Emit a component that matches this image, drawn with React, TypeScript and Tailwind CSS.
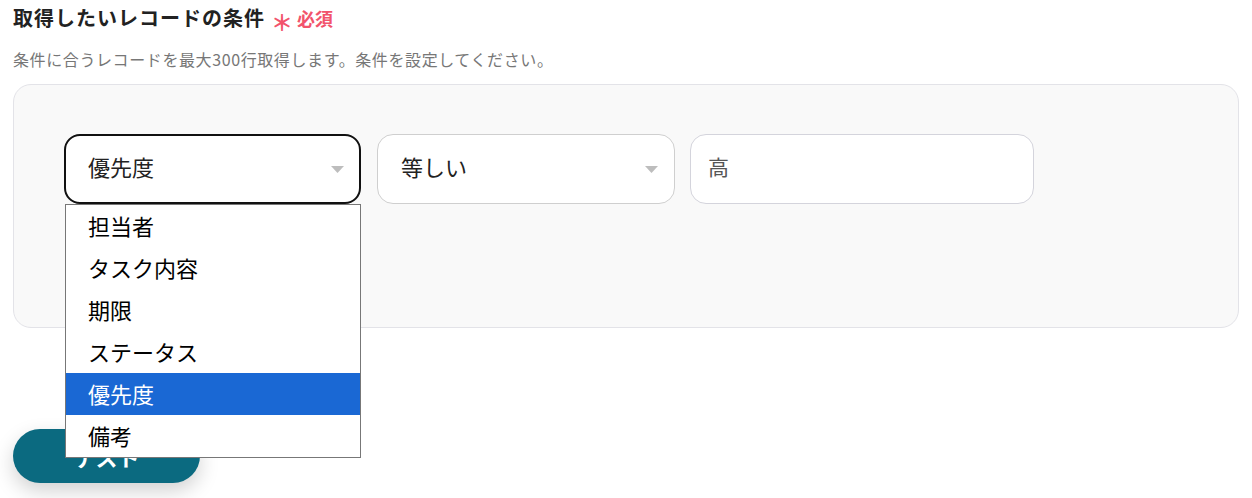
import React from 'react';

const fieldOptions = ['担当者', 'タスク内容', '期限', 'ステータス', '優先度', '備考'];

const Caret: React.FC = () => (
  <svg width="13" height="7" viewBox="0 0 13 7" className="shrink-0">
    <path d="M0 0 L13 0 L6.5 7 Z" fill="#bdbdbd" />
  </svg>
);

const App: React.FC = () => {
  const selected = '優先度';

  return (
    <div
      className="w-[1252px] h-[498px] bg-white px-[13px] pt-[3px] overflow-hidden"
      style={{ fontFamily: '"Noto Sans CJK JP", "Noto Sans", sans-serif' }}
    >
      {/* Heading */}
      <div className="flex items-center gap-[6px] leading-[30px]">
        <h2 className="text-[20px] tracking-[1px] font-bold text-[#222]">取得したいレコードの条件</h2>
        <span className="flex items-center gap-[4px] text-[18px] font-bold text-[#f2536b]">
          <span className="text-[22px] leading-none mt-[5px]">＊</span>
          必須
        </span>
      </div>
      <p className="mt-[15px] text-[16px] tracking-[0.6px] leading-[22px] text-[#777]">
        条件に合うレコードを最大300行取得します。条件を設定してください。
      </p>

      {/* Condition panel */}
      <div className="mt-[14px] h-[244px] rounded-[18px] border border-[#e3e3e8] bg-[#f9f9f9] pt-[49px] pl-[50px]">
        <div className="flex items-center">
          {/* Field select (open) */}
          <div className="relative">
            <div className="w-[297px] h-[70px] rounded-[16px] border-2 border-[#111] bg-white flex items-center justify-between pl-[22px] pr-[15px]">
              <span className="text-[22px] text-[#222] mb-[5px]">{selected}</span>
              <Caret />
            </div>
            <ul className="absolute left-[1px] top-[70px] z-10 w-[296px] border border-[#777] bg-white">
              {fieldOptions.map((opt) => (
                <li
                  key={opt}
                  className={
                    opt === selected
                      ? 'h-[42px] flex items-center pl-[22px] pb-[1px] text-[22px] bg-[#1a68d4] text-white'
                      : 'h-[42px] flex items-center pl-[22px] pb-[1px] text-[22px] text-black'
                  }
                >
                  {opt}
                </li>
              ))}
            </ul>
          </div>

          {/* Operator select */}
          <div className="ml-[16px] w-[298px] h-[70px] rounded-[16px] border border-[#cfcfcf] bg-white flex items-center justify-between pl-[23px] pr-[16px]">
            <span className="text-[22px] text-[#222] mb-[5px]">等しい</span>
            <Caret />
          </div>

          {/* Value input */}
          <div className="ml-[15px] w-[344px] h-[70px] rounded-[16px] border border-[#d4d4dc] bg-white flex items-center pl-[17px]">
            <span className="text-[21px] text-[#555] mb-[5px]">高</span>
          </div>
        </div>
      </div>

      {/* Test button */}
      <button className="mt-[101px] w-[187px] h-[54px] rounded-full bg-[#0b6a80] text-white text-[22px] font-bold shadow-[0_8px_20px_rgba(0,0,0,0.18)]">
        テスト
      </button>
    </div>
  );
};

export default App;
